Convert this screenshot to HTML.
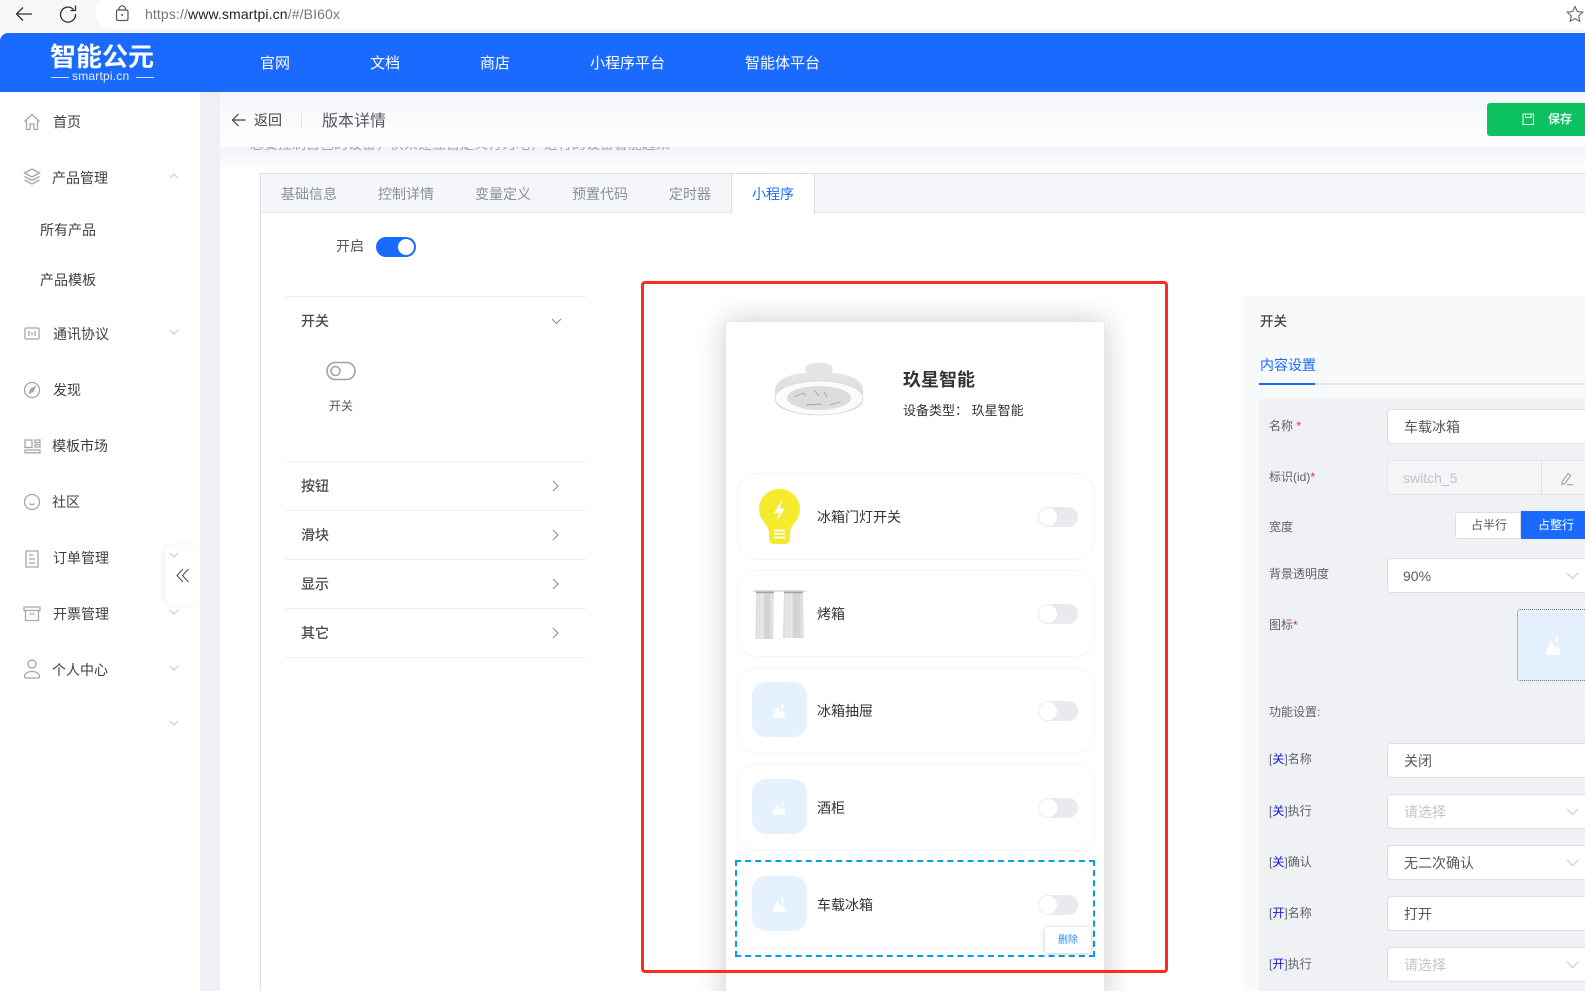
<!DOCTYPE html>
<html lang="zh"><head><meta charset="utf-8"><title>版本详情</title>
<style>
*{box-sizing:border-box}
html,body{margin:0;padding:0;width:1585px;height:991px;overflow:hidden;background:#fff}
body{position:relative;font-family:"Liberation Sans","Noto Sans CJK SC",sans-serif;color:#333;font-size:14px}
.a{position:absolute}
.t{position:absolute;white-space:nowrap;transform:translateY(-50%);line-height:20px}
svg{position:absolute;overflow:visible}
.ico{fill:none;stroke:#a0a6b4;stroke-width:1.3}
.chev{fill:none;stroke:#c4c8d0;stroke-width:1}
.nav{color:#fff;font-size:15px;top:64px}
.side{font-size:14px;color:#3c3f46}
.tab{font-size:14px;color:#8a8f99;top:194px}
.line{position:absolute;left:285px;width:301px;height:1px;background:#eceef4}
.lh{font-size:14px;left:301px;color:#4a4a4a;font-weight:500}
.item{position:absolute;left:737px;width:358px;height:87px;border:1px solid #f5f6f8;border-radius:20px;background:#fff}
.ph{position:absolute;left:752px;width:55px;height:55px;border-radius:14px;background:#e6f1fe}
.itxt{font-size:14px;left:817px;color:#333}
.sw{position:absolute;left:1038px;width:40px;height:20px;border-radius:10px;background:#e9eaee}
.sw i{position:absolute;left:1px;top:1px;width:18px;height:18px;border-radius:50%;background:#fff}
.lb{font-size:12px;left:1269px;color:#5f6268}
.lb b{font-weight:400;color:#1414e0}
.lb s{text-decoration:none;color:#f5222d}
.inp{position:absolute;left:1387px;width:220px;height:35px;background:#fff;border:1px solid #dcdfe6;border-radius:4px}
.itx{font-size:14px;left:1404px;color:#55585e}
.pl{color:#c0c4cc}
</style></head><body>
<svg width="0" height="0" style="position:absolute"><defs>
<symbol id="mtn" viewBox="0 0 12 15" preserveAspectRatio="none"><path d="M0 15V12.500L4 3.500L6.300 7.500L7.500 9.800L9 7.500L10.500 8.500L12 12.500V15Z M9.500 1 a1.300 2.600 0 1 1 -0.100 0Z" fill="#fff"/></symbol>
</defs></svg>

<!-- browser -->
<div class="a" style="left:0;top:0;width:1585px;height:33px;background:#f7f7f7"></div>
<div class="a" style="left:96px;top:-4px;width:1489px;height:33px;background:#fff;border-radius:16px 0 0 16px"></div>
<svg style="left:0;top:0" width="200" height="30"><path d="M32 14H17M23 7.500L16.500 14L23 20.500" fill="none" stroke="#333" stroke-width="1.300"/><path d="M73.500 9.500A7.500 7.500 0 1 0 75.500 14M75.500 5.500V10.500H70.500" fill="none" stroke="#333" stroke-width="1.300"/><rect x="116.500" y="10" width="11.500" height="10.500" rx="1.500" fill="none" stroke="#555" stroke-width="1.200"/><path d="M119 10V9a3.200 3.200 0 0 1 6.400 0v1" fill="none" stroke="#555" stroke-width="1.200"/><circle cx="122.200" cy="15" r="1" fill="#555"/></svg>
<div class="t" style="left:145px;top:14px;font-size:14px;letter-spacing:.12px;color:#777">https://<span style="color:#222">www.smartpi.cn</span>/#/BI60x</div>
<svg style="left:1566px;top:5px" width="18" height="18"><path d="M9 1.500L11.300 6.500L16.800 7.200L12.700 10.900L13.800 16.300L9 13.600L4.200 16.300L5.300 10.900L1.200 7.200L6.700 6.500Z" fill="none" stroke="#666" stroke-width="1.100"/></svg>

<!-- top nav -->
<div class="a" style="left:0;top:33px;width:1585px;height:59px;background:#1a6aff;border-radius:8px 0 0 0"></div>
<div class="t" style="left:50px;top:57px;font-size:26px;font-weight:700;color:#fff;letter-spacing:0;line-height:30px">智能公元</div>
<div class="t" style="left:72px;top:76px;font-size:12px;color:#e8f0ff;letter-spacing:.2px">smartpi.cn</div>
<div class="a" style="left:51px;top:77px;width:18px;height:1px;background:#cfe0ff"></div>
<div class="a" style="left:136px;top:77px;width:18px;height:1px;background:#cfe0ff"></div>
<div class="t nav" style="left:260px">官网</div>
<div class="t nav" style="left:370px">文档</div>
<div class="t nav" style="left:480px">商店</div>
<div class="t nav" style="left:590px">小程序平台</div>
<div class="t nav" style="left:745px">智能体平台</div>

<!-- gutter -->
<div class="a" style="left:200px;top:92px;width:20px;height:899px;background:#eef0f5"></div>

<!-- sidebar -->
<svg style="left:0;top:92px" width="200" height="640" class="ico">
<path d="M24.500 29.500L32 22.500L39.500 29.500M26.500 28V37.500H30V32H34V37.500H37.500V28"/>
<path d="M32 77L39.500 81L32 85L24.500 81ZM24.500 84.500L32 88.500L39.500 84.500M24.500 88L32 92L39.500 88"/>
<rect x="25" y="236" width="14" height="11" rx="1"/><path d="M29 239v5M32 240v3M35 239v5"/>
<circle cx="32" cy="298" r="7.500"/><path d="M35 295L33 299.500L29.500 301L31 297Z" fill="#a0a6b4"/>
<path d="M25 348h7v7.500h-7zM35 348h5v2.500h-5zM35 352.500h5v2.500h-5zM25 358h15v2.800H25z"/>
<circle cx="32" cy="410" r="7.500"/><path d="M29.500 411.500a3 2.500 0 0 0 5 0"/>
<path d="M26 459h12v16H26zM29 463h4M29 467h6M29 471h6"/>
<path d="M24 515h16v3.500H24zM25.500 518.500v10h13v-10M29.500 522h5"/>
<circle cx="32" cy="572" r="4"/><path d="M24.500 585c0-3.500 3-5.500 7.500-5.500s7.500 2 7.500 5.500c0 .800-1 1-2 1h-11c-1 0-2-.200-2-1z"/>
</svg>
<div class="t side" style="left:53px;top:122px">首页</div>
<div class="t side" style="left:52px;top:178px">产品管理</div>
<div class="t side" style="left:40px;top:230px">所有产品</div>
<div class="t side" style="left:40px;top:280px">产品模板</div>
<div class="t side" style="left:53px;top:334px">通讯协议</div>
<div class="t side" style="left:53px;top:390px">发现</div>
<div class="t side" style="left:52px;top:446px">模板市场</div>
<div class="t side" style="left:52px;top:502px">社区</div>
<div class="t side" style="left:53px;top:558px">订单管理</div>
<div class="t side" style="left:53px;top:614px">开票管理</div>
<div class="t side" style="left:52px;top:670px">个人中心</div>
<div class="a" style="left:165px;top:545px;width:35px;height:60px;background:#fff;border-radius:8px 0 0 8px;box-shadow:-2px 0 6px rgba(0,0,0,.06)"></div>
<svg style="left:165px;top:545px" width="35" height="60"><path d="M18 24L12 30.500L18 37M23.500 24L17.500 30.500L23.500 37" fill="none" stroke="#555" stroke-width="1.100"/></svg>
<svg style="left:0;top:0" width="200" height="760" class="chev">
<path d="M170 178L174 174L178 178"/>
<path d="M170 330L174 334L178 330"/><path d="M170 553L174 557L178 553"/><path d="M170 610L174 614L178 610"/><path d="M170 666L174 670L178 666"/><path d="M170 721L174 725L178 721"/>
</svg>

<!-- under header -->
<div class="a" style="left:220px;top:147px;width:1365px;height:26px;background:linear-gradient(rgba(240,242,247,.95),rgba(255,255,255,.2))"></div>
<div class="t" style="left:250px;top:144px;font-size:14px;color:#a2a6ae">您要控制自己的设备，快来建立自定义行为吧，进行的设备智能起来</div>
<!-- header -->
<div class="a" style="left:220px;top:92px;width:1365px;height:55px;background:linear-gradient(#f5f6fa,#fff)"></div>
<svg style="left:220px;top:92px" width="40" height="55"><path d="M25.500 28H13M18.500 22L12.500 28L18.500 34" fill="none" stroke="#444" stroke-width="1.200"/></svg>
<div class="t" style="left:254px;top:120px;font-size:14px;color:#444">返回</div>
<div class="a" style="left:301px;top:112px;width:1px;height:16px;background:#e3e5ea"></div>
<div class="t" style="left:322px;top:122px;font-size:16px;color:#55585e">版本详情</div>
<div class="a" style="left:1487px;top:103px;width:98px;height:33px;background:#0bc160;border-radius:3px 0 0 3px"></div>
<svg style="left:1522px;top:113px" width="13" height="13"><path d="M1 1h10.500v10.500H1zM3.500 1v3.500h5.500V1" fill="none" stroke="#dff8ea" stroke-width="1.100"/></svg>
<div class="t" style="left:1548px;top:119px;font-size:12px;font-weight:700;color:#e6fbef">保存</div>

<!-- main card -->
<div class="a" style="left:260px;top:173px;width:1340px;height:830px;background:#fff;border:1px solid #dcdfe6;box-shadow:-1px 0 2px rgba(0,0,0,.03)"></div>
<div class="a" style="left:261px;top:174px;width:1324px;height:39px;background:#f5f6fa;border-bottom:1px solid #e4e7ed"></div>
<div class="a" style="left:731px;top:174px;width:84px;height:40px;background:#fff;border-left:1px solid #dcdfe6;border-right:1px solid #dcdfe6"></div>
<div class="t tab" style="left:281px">基础信息</div>
<div class="t tab" style="left:378px">控制详情</div>
<div class="t tab" style="left:475px">变量定义</div>
<div class="t tab" style="left:572px">预置代码</div>
<div class="t tab" style="left:669px">定时器</div>
<div class="t tab" style="left:752px;color:#1a6aff">小程序</div>

<!-- left panel -->
<div class="t" style="left:336px;top:246px;font-size:14px;color:#55585e">开启</div>
<div class="a" style="left:376px;top:237px;width:40px;height:20px;border-radius:10px;background:#1a6aff"></div>
<div class="a" style="left:398px;top:239px;width:16px;height:16px;border-radius:50%;background:#fff"></div>
<div class="line" style="top:296px"></div>
<div class="t lh" style="top:321px">开关</div>
<svg style="left:551px;top:318px" width="11" height="8"><path d="M1 1L5.500 5.500L10 1" fill="none" stroke="#888" stroke-width="1"/></svg>
<svg style="left:326px;top:361px" width="30" height="20"><rect x="1" y="1.500" width="28" height="17" rx="8.500" fill="none" stroke="#a0a2a8" stroke-width="1.600"/><circle cx="9.500" cy="10" r="4.500" fill="none" stroke="#a0a2a8" stroke-width="1.600"/></svg>
<div class="t" style="left:329px;top:406px;font-size:12px;color:#55585e">开关</div>
<div class="line" style="top:461px"></div><div class="t lh" style="top:486px">按钮</div>
<div class="line" style="top:510px"></div><div class="t lh" style="top:535px">滑块</div>
<div class="line" style="top:559px"></div><div class="t lh" style="top:584px">显示</div>
<div class="line" style="top:608px"></div><div class="t lh" style="top:633px">其它</div>
<div class="line" style="top:657px"></div>
<svg style="left:552px;top:480px" width="10" height="170" fill="none" stroke="#888"><path d="M1 1L6 6L1 11M1 50L6 55L1 60M1 99L6 104L1 109M1 148L6 153L1 158"/></svg>

<!-- phone preview -->
<div class="a" style="left:725px;top:321px;width:380px;height:690px;background:#fff;border:1px solid #e8e8e8;border-radius:3px;box-shadow:0 0 30px rgba(0,0,0,.2)"></div>
<svg style="left:770px;top:358px" width="100" height="60">
<defs><linearGradient id="dr" x1="0" x2="0" y1="0" y2="1"><stop offset="0" stop-color="#e6e6e8"/><stop offset="1" stop-color="#d6d6d8"/></linearGradient></defs>
<ellipse cx="49" cy="11" rx="14" ry="6.500" fill="#e4e4e6"/>
<path d="M5 32C5 20 25 14 49 14s44 6 44 18v10c0 9-20 15-44 15S5 51 5 42Z" fill="url(#dr)"/>
<ellipse cx="49" cy="40" rx="44" ry="17" fill="#fbfbfb" stroke="#d8d8da" stroke-width=".8"/>
<ellipse cx="49" cy="40" rx="32" ry="12" fill="#dcdcdf"/>
<path d="M24 39l9-4 3 3M44 32l5 6M54 34l3 5M36 47l16-1M60 47l10-3" stroke="#a4a4a8" stroke-width=".9" fill="none"/>
</svg>
<div class="t" style="left:903px;top:380px;font-size:18px;font-weight:700;color:#333;line-height:24px">玖星智能</div>
<div class="t" style="left:903px;top:411px;font-size:13px;color:#333">设备类型：&nbsp;玖星智能</div>

<div class="item" style="top:473px"></div>
<div class="item" style="top:570px"></div>
<div class="item" style="top:667px"></div>
<div class="item" style="top:764px"></div>
<div class="item" style="top:861px"></div>

<svg style="left:758px;top:488px" width="44" height="58"><path d="M21.500 1C10 1 1 10 1 21c0 7 4 12 7 16 2 2.500 3 4.500 3 7v6c0 3.500 2 6 5 6h11c3 0 5-2.500 5-6v-6c0-2.500 1-4.500 3-7 3-4 7-9 7-16C42 10 33 1 21.500 1Z" fill="#f5ea2b"/><path d="M24 12L16 25H21L18.500 33L27 20.500H22Z" fill="#fff"/><path d="M16 42.500H27M16 46H27M16 49.500H27" stroke="#fff" stroke-width="1.800"/></svg>
<svg style="left:753px;top:589px" width="54" height="52">
<defs><linearGradient id="c" x1="0" x2="1" y1="0" y2="0"><stop offset="0" stop-color="#dadada"/><stop offset=".3" stop-color="#efefef"/><stop offset=".6" stop-color="#d2d2d2"/><stop offset="1" stop-color="#e6e6e6"/></linearGradient></defs>
<path d="M3 2.500H21L20.500 50H2.500Z" fill="url(#c)"/><path d="M31 2.500H50L51 49H30Z" fill="url(#c)"/>
<path d="M7 3V50M12 3V50M16 3V50M36 3V49M41 3V49M46 3V49" stroke="#cdcdcd" stroke-width=".7"/>
<rect x="0" y="1.500" width="54" height="1" fill="#c4c4c4"/>
<path d="M3 3.500H21M31 3.500H50" stroke="#a4a4a4" stroke-width="1.500"/>
</svg>
<div class="ph" style="top:682px"></div><svg style="left:773px;top:703px" width="12" height="15"><use href="#mtn" width="12" height="15"/></svg>
<div class="ph" style="top:779px"></div><svg style="left:773px;top:800px" width="12" height="15"><use href="#mtn" width="12" height="15"/></svg>
<div class="ph" style="top:876px"></div><svg style="left:773px;top:897px" width="12" height="15"><use href="#mtn" width="12" height="15"/></svg>

<div class="t itxt" style="top:517px">冰箱门灯开关</div>
<div class="t itxt" style="top:614px">烤箱</div>
<div class="t itxt" style="top:711px">冰箱抽屉</div>
<div class="t itxt" style="top:808px">酒柜</div>
<div class="t itxt" style="top:905px">车载冰箱</div>
<div class="sw" style="top:507px"><i></i></div>
<div class="sw" style="top:604px"><i></i></div>
<div class="sw" style="top:701px"><i></i></div>
<div class="sw" style="top:798px"><i></i></div>
<div class="sw" style="top:895px"><i></i></div>

<div class="a" style="left:735px;top:860px;width:360px;height:97px;border:2px dashed #00a0e9"></div>
<div class="a" style="left:1045px;top:927px;width:46px;height:26px;background:#fff;border-radius:3px;box-shadow:0 1px 6px rgba(0,0,0,.22)"></div>
<div class="t" style="left:1058px;top:941px;font-size:10px;color:#2c8df4">删除</div>

<div class="a" style="left:641px;top:281px;width:527px;height:692px;border:3px solid #ff2a20;border-radius:4px"></div>

<!-- right panel -->
<div class="a" style="left:1244px;top:296px;width:341px;height:695px;background:#f8f9fb"></div>
<div class="t" style="left:1260px;top:322px;font-size:13.500px;font-weight:500;color:#444">开关</div>
<div class="t" style="left:1260px;top:365px;font-size:14px;color:#1a6aff">内容设置</div>
<div class="a" style="left:1259px;top:383px;width:326px;height:2px;background:#e4e7ed"></div>
<div class="a" style="left:1259px;top:383px;width:56px;height:2px;background:#1a6aff"></div>
<div class="a" style="left:1259px;top:399px;width:326px;height:592px;background:#f0f1f5;border-radius:6px 0 0 0"></div>

<div class="t lb" style="top:426px">名称 <s>*</s></div>
<div class="inp" style="top:409px"></div><div class="t itx" style="top:427px">车载冰箱</div>
<div class="t lb" style="top:477px">标识(id)<s>*</s></div>
<div class="inp" style="top:460px;background:#f4f5f7;border-color:#e4e7ed"></div>
<div class="a" style="left:1541px;top:461px;width:1px;height:33px;background:#e0e2e8"></div>
<div class="t" style="left:1403px;top:478px;font-size:14px;color:#c0c4cc">switch_5</div>
<svg style="left:1560px;top:472px" width="14" height="14"><path d="M2 10L8 1.500L10.500 3.500L5 11.500L2 12.500ZM7 12.800H13" fill="none" stroke="#999" stroke-width="1"/></svg>
<div class="t lb" style="top:527px">宽度</div>
<div class="a" style="left:1455px;top:512px;width:66px;height:27px;background:#fff;border:1px solid #dcdfe6;border-radius:3px 0 0 3px"></div>
<div class="a" style="left:1521px;top:511px;width:64px;height:28px;background:#1a6aff"></div>
<div class="t" style="left:1471px;top:525px;font-size:12px;color:#55585e">占半行</div>
<div class="t" style="left:1538px;top:525px;font-size:12px;color:#fff">占整行</div>
<div class="t lb" style="top:574px">背景透明度</div>
<div class="inp" style="top:558px"></div><div class="t itx" style="top:576px;left:1403px">90%</div>
<div class="t lb" style="top:625px">图标<s>*</s></div>
<div class="a" style="left:1517px;top:609px;width:80px;height:72px;background:#e4f0fe;border:1px dotted #777;border-radius:3px"></div>
<svg style="left:1546px;top:635px" width="14" height="20"><use href="#mtn" width="14" height="20"/></svg>
<div class="t lb" style="top:712px">功能设置:</div>
<div class="t lb" style="top:759px">[<b>关</b>]名称</div>
<div class="inp" style="top:743px"></div><div class="t itx" style="top:761px">关闭</div>
<div class="t lb" style="top:811px">[<b>关</b>]执行</div>
<div class="inp" style="top:794px"></div><div class="t itx pl" style="top:812px">请选择</div>
<div class="t lb" style="top:862px">[<b>关</b>]确认</div>
<div class="inp" style="top:845px"></div><div class="t itx" style="top:863px">无二次确认</div>
<div class="t lb" style="top:913px">[<b>开</b>]名称</div>
<div class="inp" style="top:896px"></div><div class="t itx" style="top:914px">打开</div>
<div class="t lb" style="top:964px">[<b>开</b>]执行</div>
<div class="inp" style="top:947px"></div><div class="t itx pl" style="top:965px">请选择</div>
<svg style="left:1566px;top:572px" width="14" height="410" fill="none" stroke="#c4c8d0"><path d="M1 1L6.500 6.500L12 1M1 237L6.500 242.500L12 237M1 288L6.500 293.500L12 288M1 390L6.500 395.500L12 390"/></svg>
</body></html>
